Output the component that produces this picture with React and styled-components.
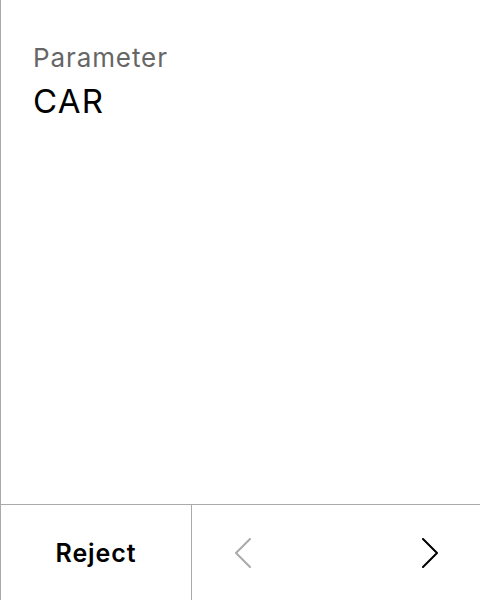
import { createGlobalStyle, styled } from "styled-components"

const GlobalStyle = createGlobalStyle`
    html, body {
        margin: 0;
        padding: 0;
        background: #fff;
    }
    body {
        font-family: Inter, "Noto Sans", sans-serif;
    }
`

const Screen = styled.div`
    box-sizing: border-box;
    display: flex;
    flex-direction: column;
    width: 480px;
    height: 600px;
    border-left: 1px solid #aaa;
`

const Content = styled.div`
    flex: 1;
    padding: 41px 32px 0;
`

const Label = styled.div`
    font-size: 26px;
    line-height: 34px;
    letter-spacing: 0.9px;
    color: #666;
`

const Value = styled.div`
    margin-top: 6px;
    font-size: 33px;
    line-height: 40px;
    letter-spacing: 1.2px;
    color: #000;
`

const Footer = styled.div`
    box-sizing: border-box;
    display: flex;
    height: 96px;
    border-top: 1px solid #aaa;
`

const RejectButton = styled.button`
    width: 191px;
    border: none;
    border-right: 1px solid #aaa;
    background: none;
    font-family: inherit;
    font-size: 25px;
    font-weight: 600;
    letter-spacing: 0.9px;
    color: #000;
    padding: 0;
`

const Nav = styled.div`
    flex: 1;
    display: flex;
    align-items: center;
    justify-content: space-between;
    padding: 0 26px;
`

const NavButton = styled.button`
    width: 48px;
    height: 48px;
    display: flex;
    align-items: center;
    justify-content: center;
    border: none;
    background: none;
    padding: 0;
    color: ${(p) => (p.disabled ? "#aaa" : "#000")};
`

function Chevron({ dir }) {
    const d = dir === "left" ? "M16 1 L2 15 L16 29" : "M1 1 L15 15 L1 29"
    return (
        <svg width="17" height="30" viewBox="0 0 17 30" fill="none">
            <path d={d} stroke="currentColor" strokeWidth="2" strokeLinecap="round" strokeLinejoin="round" />
        </svg>
    )
}

export default function App() {
    return (
        <>
            <GlobalStyle />
            <Screen>
                <Content>
                    <Label>Parameter</Label>
                    <Value>CAR</Value>
                </Content>
                <Footer>
                    <RejectButton>Reject</RejectButton>
                    <Nav>
                        <NavButton disabled>
                            <Chevron dir="left" />
                        </NavButton>
                        <NavButton>
                            <Chevron dir="right" />
                        </NavButton>
                    </Nav>
                </Footer>
            </Screen>
        </>
    )
}
